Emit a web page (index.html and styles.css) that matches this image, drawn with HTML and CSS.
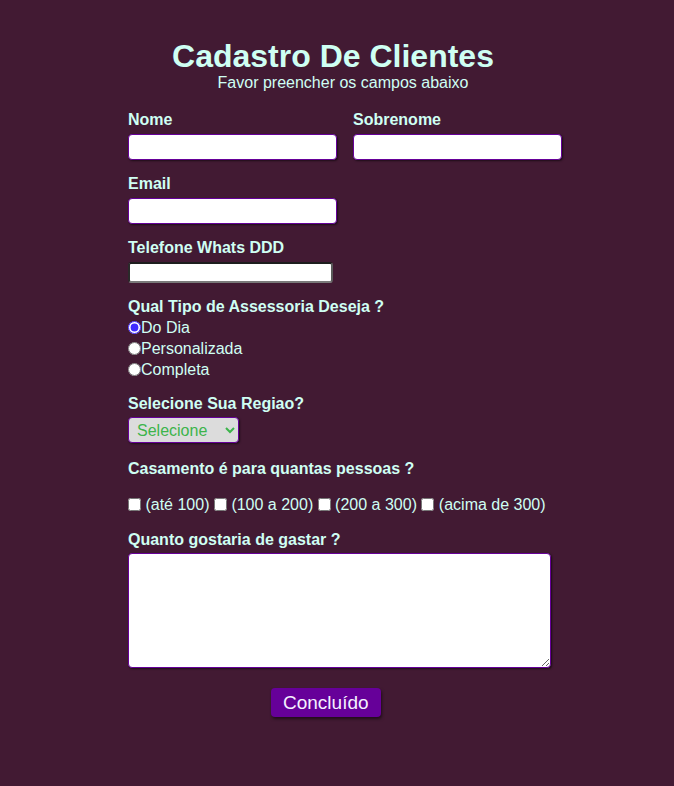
FILE: index.html
```html
<!DOCTYPE html>
<html lang="pt-BR">
<head>
<meta charset="utf-8">
<title>Cadastro De Clientes</title>
<link rel="stylesheet" href="styles.css">
</head>
<body>
<header class="header">
  <h1 class="title">Cadastro De Clientes</h1>
  <p class="subtitle">Favor preencher os campos abaixo</p>
</header>
<form class="form">
  <div class="row">
    <div class="field">
      <label class="label" for="nome">Nome</label>
      <input class="input" type="text" id="nome">
    </div>
    <div class="field">
      <label class="label" for="sobrenome">Sobrenome</label>
      <input class="input" type="text" id="sobrenome">
    </div>
  </div>
  <div class="field">
    <label class="label" for="email">Email</label>
    <input class="input" type="email" id="email">
  </div>
  <div class="field">
    <label class="label" for="tel">Telefone Whats DDD</label>
    <input class="plain-input" type="tel" id="tel">
  </div>
  <div class="field">
    <span class="label label-tight">Qual Tipo de Assessoria Deseja ?</span>
    <label class="option"><input class="radio" type="radio" name="tipo" checked>Do Dia</label>
    <label class="option"><input class="radio" type="radio" name="tipo">Personalizada</label>
    <label class="option"><input class="radio" type="radio" name="tipo">Completa</label>
  </div>
  <div class="field field-region">
    <label class="label label-select" for="regiao">Selecione Sua Regiao?</label>
    <select class="select" id="regiao">
      <option>Selecione</option>
      <option>Norte</option>
      <option>Sul</option>
    </select>
  </div>
  <div class="field field-people">
    <span class="label">Casamento é para quantas pessoas ?</span>
    <div class="checks">
      <input class="check" type="checkbox"> (até 100) <input class="check" type="checkbox"> (100 a 200) <input class="check" type="checkbox"> (200 a 300) <input class="check" type="checkbox"> (acima de 300)
    </div>
  </div>
  <div class="field field-budget">
    <label class="label label-select" for="gasto">Quanto gostaria de gastar ?</label>
    <textarea class="textarea" id="gasto"></textarea>
  </div>
  <div class="actions">
    <button class="button" type="button">Concluído</button>
  </div>
</form>
</body>
</html>
```
FILE: styles.css
```css
html, body {
  margin: 0;
  padding: 0;
}
body {
  background: #421a33;
  color: #cffff3;
  font-family: "Liberation Sans", Arial, sans-serif;
  font-size: 16px;
  min-height: 786px;
}
.header {
  padding-top: 39px;
  text-align: center;
}
.title {
  margin: 0;
  font-size: 32px;
  line-height: 35px;
  font-weight: bold;
  padding-right: 8px;
}
.subtitle {
  margin: 0;
  font-size: 16px;
  line-height: 18px;
  padding-left: 12px;
}
.form {
  width: 436px;
  margin: 19px 0 0 128px;
  display: flex;
  flex-direction: column;
  gap: 15px;
}
.row {
  display: flex;
  gap: 16px;
}
.field {
  display: flex;
  flex-direction: column;
  align-items: flex-start;
}
.field-region {
  margin-bottom: 2px;
}
.field-budget {
  margin-top: 1px;
}
.label {
  display: block;
  font-weight: bold;
  line-height: 18px;
  margin-bottom: 5px;
}
.label-tight {
  margin-bottom: 1px;
}
.label-select {
  margin-bottom: 4px;
}
.input {
  box-sizing: border-box;
  width: 209px;
  height: 26px;
  margin: 0;
  border: 1px solid #660099;
  border-radius: 4px;
  background: #fff;
  box-shadow: 1px 1px 2px rgba(0, 0, 0, 0.55);
  font-size: 16px;
}
.plain-input {
  box-sizing: border-box;
  width: 205px;
  height: 21px;
  margin: 0;
  font-size: 13px;
  background: #fff;
  border: 2px solid;
  border-color: #1e1e1e #5a5a5a #7a7a7a #2a2a2a;
  border-radius: 3px;
}
.option {
  display: flex;
  align-items: center;
  line-height: 21px;
  height: 21px;
}
.radio {
  margin: 0;
  width: 13px;
  height: 13px;
  accent-color: #3f2bff;
}
.select {
  box-sizing: border-box;
  width: 111px;
  height: 26px;
  margin: 0;
  padding: 0 4px;
  border: 1px solid #660099;
  border-radius: 4px;
  background: #dcdcdc;
  color: #3cb44b;
  font-family: "Liberation Sans", Arial, sans-serif;
  font-size: 16px;
  box-shadow: 1px 1px 2px rgba(0, 0, 0, 0.5);
}
.checks {
  margin-top: 11px;
  line-height: 21px;
  white-space: nowrap;
}
.check {
  margin: 0;
  width: 13px;
  height: 13px;
  vertical-align: -1px;
}
.textarea {
  box-sizing: border-box;
  width: 423px;
  height: 115px;
  margin: 0;
  border: 1px solid #660099;
  border-radius: 4px;
  background: #fff;
  box-shadow: 1px 1px 2px rgba(0, 0, 0, 0.55);
}
.actions {
  padding-top: 5px;
  padding-left: 143px;
}
.button {
  box-sizing: border-box;
  height: 29px;
  padding: 0 12px;
  border: 0;
  border-radius: 4px;
  background: #660099;
  color: #f4f0ff;
  font-family: "Liberation Sans", Arial, sans-serif;
  font-size: 19px;
  line-height: 29px;
  box-shadow: 1px 2px 3px rgba(0, 0, 0, 0.5);
}
```
